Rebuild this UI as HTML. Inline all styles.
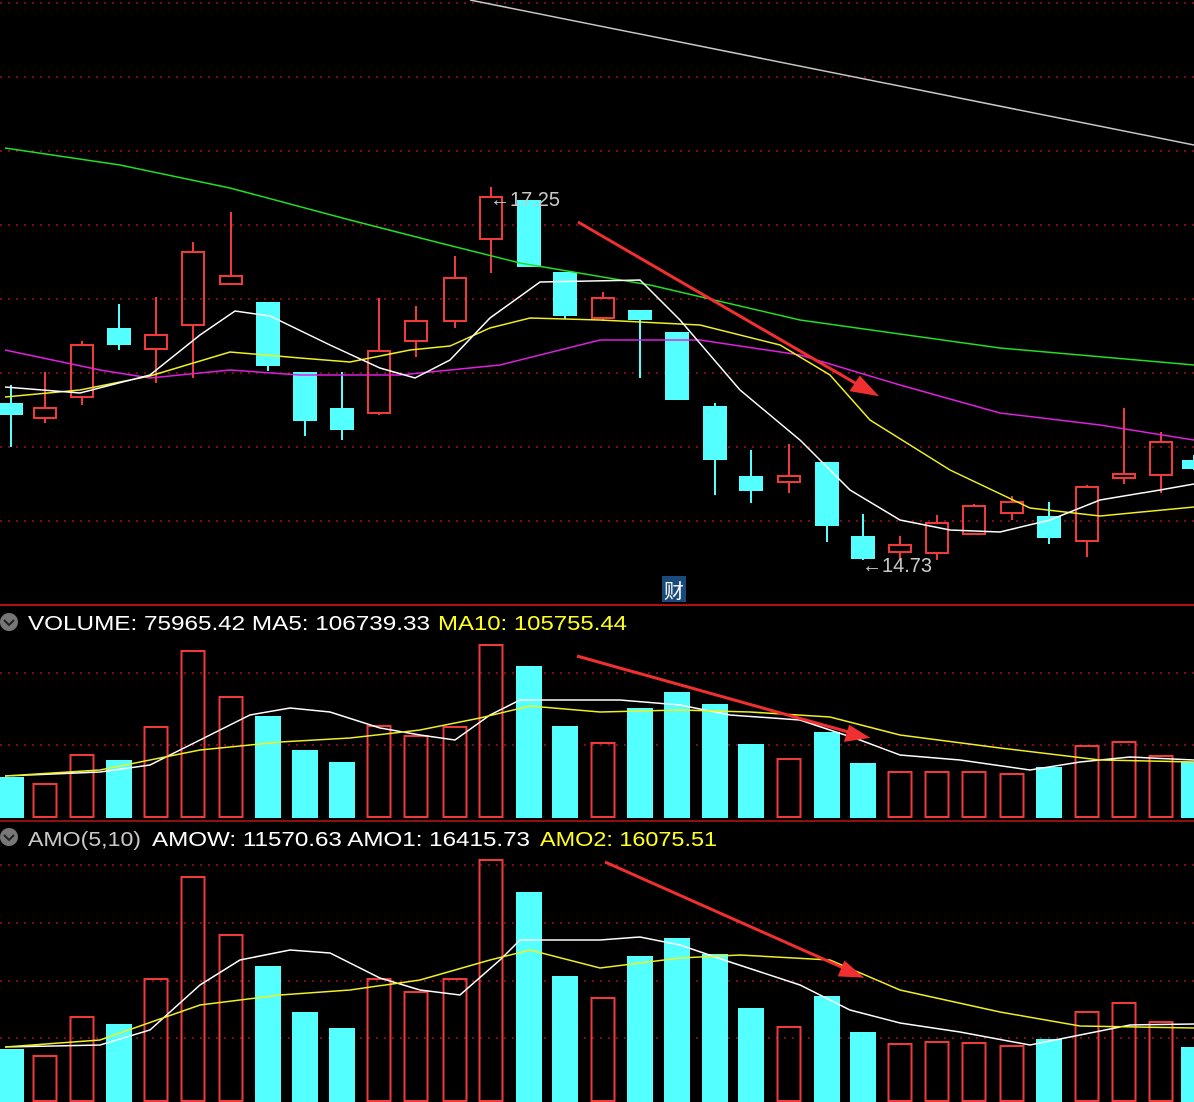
<!DOCTYPE html>
<html><head><meta charset="utf-8"><style>
html,body{margin:0;padding:0;background:#000;width:1194px;height:1102px;overflow:hidden}
svg{display:block}
text{font-family:"Liberation Sans Narrow","Liberation Sans",sans-serif;font-size:20px}
</style></head><body>
<svg id="s" width="1194" height="1102" viewBox="0 0 1194 1102" xmlns="http://www.w3.org/2000/svg">
<g stroke="#a01020" stroke-width="1.5" stroke-dasharray="2,6">
<line x1="0" y1="3" x2="1194" y2="3"/><line x1="0" y1="77" x2="1194" y2="77"/><line x1="0" y1="151" x2="1194" y2="151"/><line x1="0" y1="225" x2="1194" y2="225"/><line x1="0" y1="299" x2="1194" y2="299"/><line x1="0" y1="373" x2="1194" y2="373"/><line x1="0" y1="447" x2="1194" y2="447"/><line x1="0" y1="521" x2="1194" y2="521"/>
<line x1="0" y1="673" x2="1194" y2="673"/><line x1="0" y1="745" x2="1194" y2="745"/>
<line x1="0" y1="865" x2="1194" y2="865"/><line x1="0" y1="923" x2="1194" y2="923"/><line x1="0" y1="981" x2="1194" y2="981"/><line x1="0" y1="1038" x2="1194" y2="1038"/>
</g>
<line x1="0" y1="605" x2="1194" y2="605" stroke="#b01010" stroke-width="2"/>
<line x1="0" y1="821" x2="1194" y2="821" stroke="#901010" stroke-width="2"/>
<g id="g"></g>
<g fill="none" stroke-width="1.5">
<polyline stroke="#c8c8c8" points="470,0 1194,145"/>
<polyline stroke="#22e022" points="5,148 120,165 230,188 350,220 440,243 520,263 650,285 800,320 1000,348 1194,365"/>
<polyline stroke="#e020e0" points="5,350 100,370 150,378 230,370 300,375 400,375 500,365 600,340 700,340 800,355 900,385 1000,413 1100,425 1194,440"/>
<polyline stroke="#f0f020" points="5,397 80,390 150,376 230,352 300,358 350,362 410,350 450,346 490,328 530,318 600,320 700,325 780,345 830,375 870,420 950,470 1030,508 1100,516 1194,507"/>
<polyline stroke="#fff" points="5,387 80,393 150,375 200,335 235,311 270,316 330,345 380,368 415,378 450,360 490,318 540,282 640,280 680,320 740,390 800,440 850,490 900,520 950,530 1000,532 1050,520 1100,500 1160,490 1194,484"/>
<polyline stroke="#fff" points="5,776 100,772 150,765 200,740 250,715 290,708 330,712 380,728 420,735 455,740 490,715 520,700 560,700 620,700 680,705 730,715 800,720 860,740 900,755 960,760 1030,770 1080,762 1130,757 1194,760"/>
<polyline stroke="#f0f020" points="5,776 100,770 200,750 280,742 350,738 420,730 480,718 530,706 600,712 680,710 750,712 830,717 900,735 1000,748 1100,760 1194,762"/>
<polyline stroke="#fff" points="5,1047 100,1045 150,1030 200,985 240,960 290,950 330,953 380,978 420,990 460,995 500,960 520,940 600,940 640,937 680,945 730,962 800,985 850,1010 900,1023 960,1032 1030,1045 1080,1035 1130,1025 1194,1024"/>
<polyline stroke="#f0f020" points="5,1047 100,1040 200,1005 280,995 350,990 420,980 490,960 530,950 600,968 680,958 740,955 830,960 900,990 1000,1012 1080,1026 1194,1028"/>
</g>
<g stroke="#f03030" stroke-width="3" fill="#f03030">
<line x1="578" y1="222" x2="862" y2="387"/><polygon points="875,394 852,390 860,378"/>
<line x1="577" y1="656" x2="852" y2="733"/><polygon points="866,737 846,740 850,727"/>
<line x1="605" y1="862" x2="848" y2="970"/><polygon points="860,976 840,975 845,963"/>
</g>
<text x="490" y="206" fill="#c8c8c8" font-size="19">←17.25</text>
<text x="862" y="572" fill="#c8c8c8" font-size="19">←14.73</text>
<rect x="662" y="576" width="24" height="26" fill="#1a4a7a"/>
<text x="664" y="598" fill="#fff" font-size="20" style="font-family:'Noto Sans CJK SC',sans-serif">财</text>
<circle cx="9" cy="622" r="9" fill="#777"/><path d="M4,620 L9,625 L14,620" stroke="#222" stroke-width="2" fill="none"/>
<text x="28" y="630" fill="#fff" textLength="402" lengthAdjust="spacingAndGlyphs">VOLUME: 75965.42  MA5: 106739.33</text>
<text x="438" y="630" fill="#ffff20" textLength="189" lengthAdjust="spacingAndGlyphs">MA10: 105755.44</text>
<circle cx="9" cy="837" r="9" fill="#777"/><path d="M4,835 L9,840 L14,835" stroke="#222" stroke-width="2" fill="none"/>
<text x="28" y="846" fill="#c8c8c8" textLength="113" lengthAdjust="spacingAndGlyphs">AMO(5,10)</text>
<text x="152" y="846" fill="#fff" textLength="378" lengthAdjust="spacingAndGlyphs">AMOW: 11570.63  AMO1: 16415.73</text>
<text x="540" y="846" fill="#ffff20" textLength="177" lengthAdjust="spacingAndGlyphs">AMO2: 16075.51</text>
</svg>
<script>
var xs=[11,45,82,119,156,193,231,268,305,342,379,416,455,491,529,565,603,640,677,715,751,789,827,863,900,937,974,1012,1049,1087,1124,1161,1194];
// [up?, bodyTop, bodyBot, wickTop, wickBot]
var c=[[0,403,415,385,447],[1,408,418,372,423],[1,345,397,341,405],[0,328,345,304,350],[1,335,349,297,383],[1,252,325,242,378],[1,276,284,212,284],[0,302,366,302,371],[0,372,421,372,436],[0,408,430,372,440],[1,351,413,298,415],[1,321,341,306,357],[1,278,321,256,328],[1,197,239,187,273],[0,200,267,200,267],[0,272,316,272,319],[1,298,318,292,321],[0,310,320,310,378],[0,332,400,332,400],[0,406,460,403,495],[0,476,491,450,503],[1,476,482,444,493],[0,462,526,462,542],[0,536,559,514,560],[1,545,552,536,560],[1,523,553,515,560],[1,506,534,504,534],[1,502,513,496,520],[0,516,538,502,544],[1,487,541,485,557],[1,474,478,408,484],[1,442,475,432,493],[0,460,469,455,470]];
var v=[777,784,755,760,727,651,697,716,750,762,726,736,727,645,666,726,743,708,692,704,744,759,732,763,772,772,772,774,767,746,742,756,762];
var a=[1049,1056,1017,1024,979,877,935,966,1012,1028,979,992,979,860,892,976,998,956,938,954,1008,1027,996,1032,1044,1042,1043,1046,1039,1012,1003,1022,1047];
var h='',R='#f03a3a',C='#54ffff';
for(var i=0;i<xs.length;i++){var x=xs[i],d=c[i],up=d[0];
 if(up){h+='<line x1="'+x+'" y1="'+d[3]+'" x2="'+x+'" y2="'+d[1]+'" stroke="'+R+'" stroke-width="2"/><line x1="'+x+'" y1="'+d[2]+'" x2="'+x+'" y2="'+d[4]+'" stroke="'+R+'" stroke-width="2"/>';
  h+='<rect x="'+(x-11)+'" y="'+d[1]+'" width="22" height="'+Math.max(d[2]-d[1],3)+'" fill="none" stroke="'+R+'" stroke-width="2"/>';}
 else{h+='<line x1="'+x+'" y1="'+d[3]+'" x2="'+x+'" y2="'+d[4]+'" stroke="'+C+'" stroke-width="2"/><rect x="'+(x-12)+'" y="'+d[1]+'" width="24" height="'+(d[2]-d[1])+'" fill="'+C+'"/>';}
 var vb=[[v[i],818],[a[i],1102]];
 for(var k=0;k<2;k++){var t=vb[k][0],b=vb[k][1];
  if(up)h+='<rect x="'+(x-11.5)+'" y="'+t+'" width="23" height="'+(b-t-1)+'" fill="none" stroke="'+R+'" stroke-width="2"/>';
  else h+='<rect x="'+(x-13)+'" y="'+t+'" width="26" height="'+(b-t)+'" fill="'+C+'"/>';}
}
document.getElementById('g').innerHTML=h;
</script>
</body></html>
